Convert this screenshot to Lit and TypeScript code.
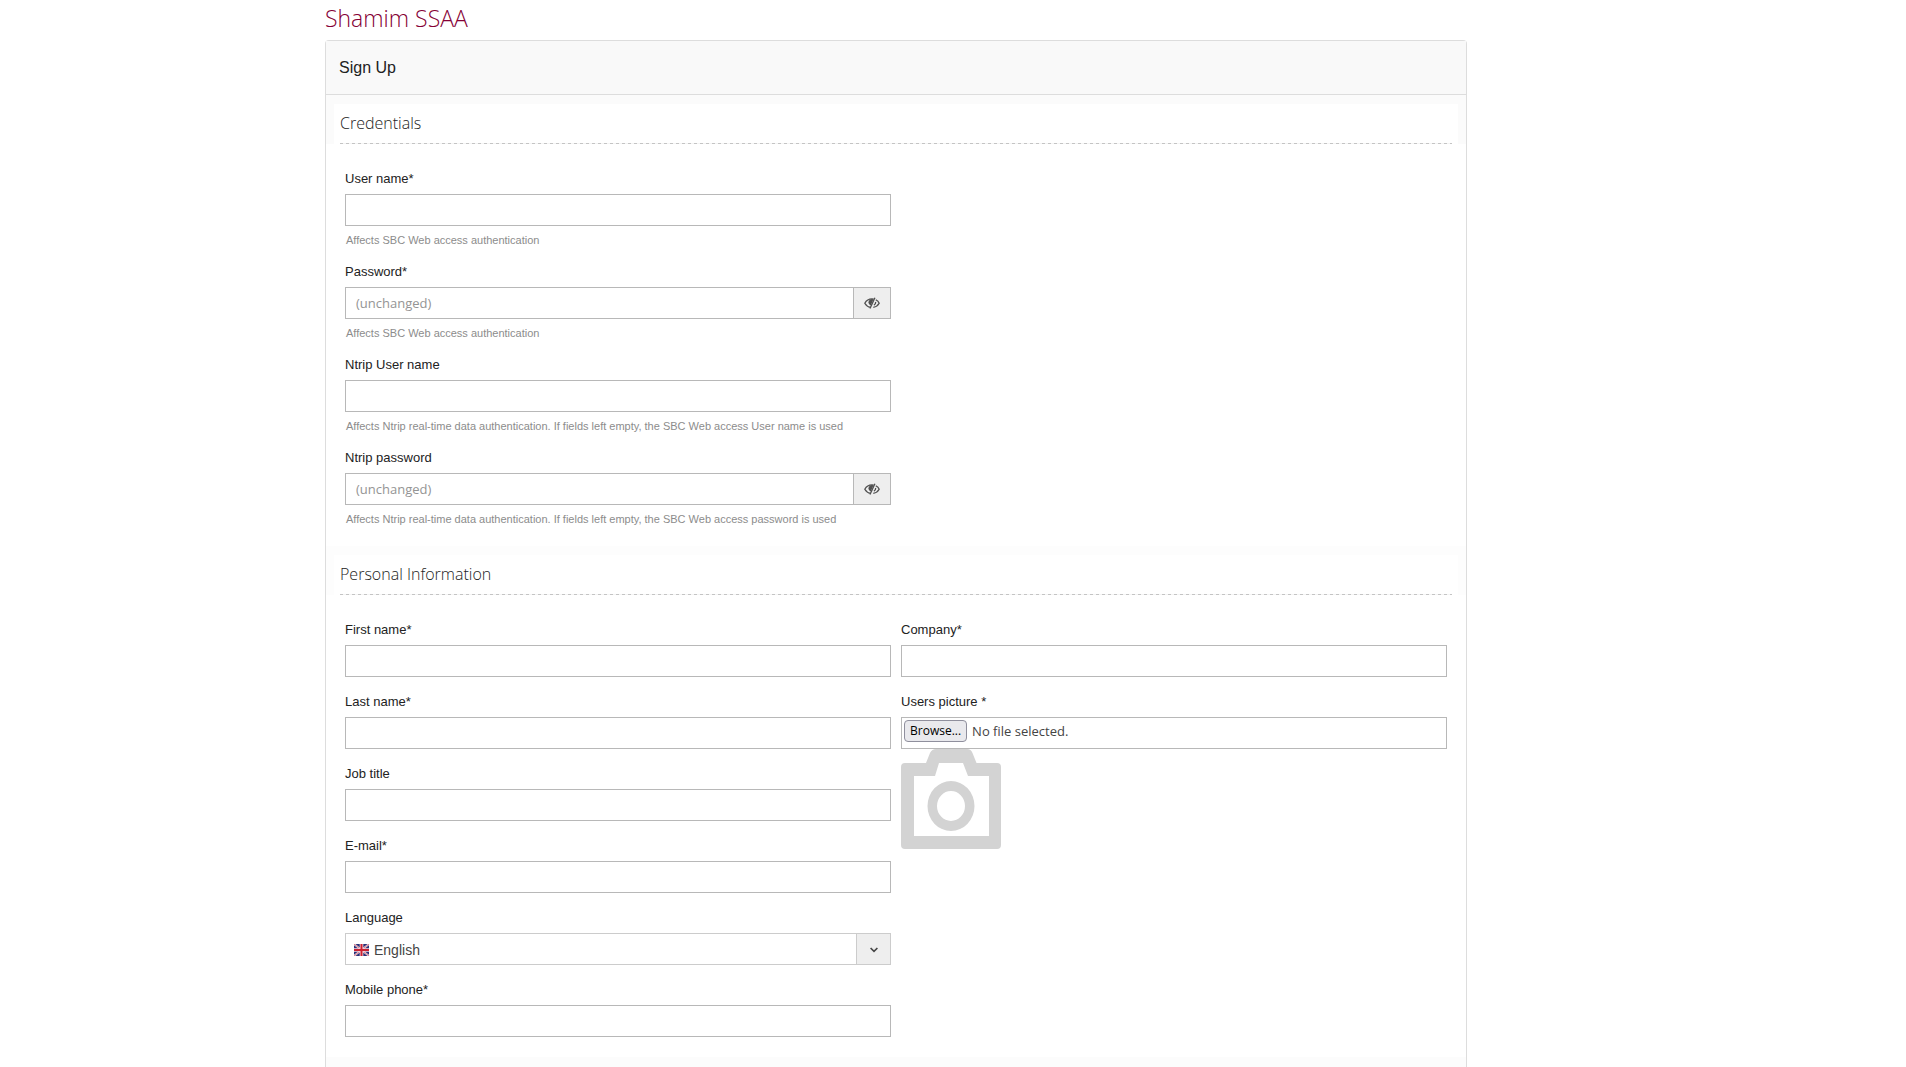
import { LitElement, html, svg, css, nothing } from "lit";
import { customElement, property } from "lit/decorators.js";

interface Field {
  id: string;
  label: string;
  kind?: "text" | "password" | "email" | "tel";
  hint?: string;
}

const WEB = "Affects SBC Web access authentication";
const NTRIP = "Affects Ntrip real-time data authentication. If fields left empty, the SBC Web access ";

const credentials: Field[] = [
  { id: "user-name", label: "User name*", hint: WEB },
  { id: "password", label: "Password*", kind: "password", hint: WEB },
  { id: "ntrip-user", label: "Ntrip User name", hint: NTRIP + "User name is used" },
  { id: "ntrip-password", label: "Ntrip password", kind: "password", hint: NTRIP + "password is used" },
];

const personal: Field[] = [
  { id: "first-name", label: "First name*" },
  { id: "last-name", label: "Last name*" },
  { id: "job-title", label: "Job title" },
  { id: "email", label: "E-mail*", kind: "email" },
];

const eyeSlash = html`<svg class="eye" viewBox="0 0 16 12" aria-hidden="true">
  <path d="M6.600 10.300C4.100 9.900 2 8.300.8 6.200 2.300 3.500 4.800 1.900 8 1.900c.6 0 1.200.1 1.700.2" />
  <path d="M11.800 2.800C13.300 3.600 14.500 4.700 15.200 6.200c-1.100 2-3 3.600-5.900 4.100" />
  <path d="M10.900 .7 6 11.500" />
  <path class="solid" d="M9.500 2.200 6.800 8.400C5.300 7.900 4.500 6.800 4.500 5.300 4.500 3.500 6.100 2 8 2z" />
  <path d="M11.700 4.900c.1 1.300-.6 2.700-1.800 3.200" />
</svg>`;

const camera = svg`<path fill-rule="evenodd" d="M4 14H25L29 4Q31 0 35 0H66Q70 0 71.500 4L75.500 14H96Q100 14 100 18V96Q100 100 96 100H4Q0 100 0 96V18Q0 14 4 14ZM13 27V87H88V27H67L62 14H38L34 27Z"/>
  <path fill-rule="evenodd" d="M50 32A23.500 25 0 0 1 50 82A23.500 25 0 0 1 50 32ZM50 42A14 15 0 0 0 50 72A14 15 0 0 0 50 42Z"/>`;

const controls = css`
  .field {
    display: flex;
    flex-direction: column;
  }
  label {
    margin-bottom: 5px;
    font-size: 13px;
    line-height: 20px;
    color: #222;
  }
  .box {
    display: flex;
    box-sizing: border-box;
    height: 32px;
    border: 1px solid #b8b8b8;
    background: #fff;
  }
`;

@customElement("sign-field")
export class SignField extends LitElement {
  @property({ attribute: false }) field!: Field;

  static styles = [
    controls,
    css`
      :host {
        display: block;
      }
      input {
        flex: 1;
        min-width: 0;
        border: 0;
        padding: 0 10px;
        background: none;
        font: 13px/18px "Open Sans", sans-serif;
        color: #404040;
      }
      input::placeholder {
        color: #949494;
      }
      button {
        width: 37px;
        padding: 0;
        border: 0;
        border-left: 1px solid #b8b8b8;
        background: #eee;
        display: grid;
        place-items: center;
      }
      .eye {
        width: 16px;
        height: 12px;
        fill: none;
        stroke: #505050;
        stroke-width: 1.3;
      }
      .solid {
        fill: #505050;
        stroke: none;
      }
      .hint {
        margin: 7px 0 0;
        padding-left: 1px;
        font-size: 11px;
        line-height: 14px;
        color: #8c8c8c;
      }
    `,
  ];

  render() {
    const { id, label, kind = "text", hint } = this.field;
    const secret = kind === "password";
    return html`<div class="field">
      <label for=${id}>${label}</label>
      <div class="box">
        <input id=${id} type=${kind} placeholder=${secret ? "(unchanged)" : nothing} />
        ${secret ? html`<button type="button" aria-label="Show password">${eyeSlash}</button>` : nothing}
      </div>
      ${hint ? html`<p class="hint">${hint}</p>` : nothing}
    </div>`;
  }
}

@customElement("app-root")
export class AppRoot extends LitElement {
  static styles = [
    controls,
    css`
      :host {
        display: grid;
        grid-template-columns: 325fr 1142fr 439fr;
        font-family: "Liberation Sans", Arial, sans-serif;
        background: #fff;
      }
      main {
        grid-column: 2;
        min-width: 0;
      }
      h1 {
        margin: 0;
        height: 40px;
        font: 300 23px/36px "Open Sans", sans-serif;
        color: #850035;
      }
      .panel {
        border: 1px solid #ddd;
        border-radius: 4px 4px 0 0;
        border-bottom: 0;
      }
      h2 {
        margin: 0;
        padding: 0 13px;
        font-size: 16px;
        font-weight: 400;
        line-height: 53px;
        color: #222;
        background: #f9f9f9;
        border-bottom: 1px solid #ddd;
      }
      section {
        padding-bottom: 20px;
      }
      .legend {
        border: 0 solid #fbfbfb;
        border-width: 9px 8px 0;
        padding: 0 6px;
      }
      .next .legend {
        border-color: #fdfdfd;
      }
      h3 {
        margin: 0;
        font: 300 16px/39px "Open Sans", sans-serif;
        color: #222;
      }
      .rule {
        height: 1px;
        background: repeating-linear-gradient(90deg, #c4c4c4 0 3px, #f4f4f4 3px 6px);
      }
      .columns {
        display: grid;
        grid-template-columns: 1fr 1fr;
        gap: 10px;
        padding: 25px 19px 0;
      }
      .column {
        display: flex;
        flex-direction: column;
        gap: 15px;
      }
      .pick {
        position: relative;
        align-items: flex-start;
        gap: 5px;
        padding: 2px;
        font: 13px/22px "Open Sans", sans-serif;
        color: #444;
      }
      .pick input {
        position: absolute;
        inset: 0;
        width: 100%;
        opacity: 0;
      }
      .browse {
        padding: 0 5px;
        border: 1px solid #8f8f9d;
        border-radius: 4px;
        background: #e9e9ed;
        font-size: 12px;
        line-height: 20px;
        color: #000;
      }
      .camera {
        display: block;
        width: 100px;
        height: 100px;
        fill: #d3d3d3;
      }
      .photo {
        display: flex;
        flex-direction: column;
      }
      .select {
        border-color: #ccc;
        display: grid;
        grid-template-columns: 8px 16px 1fr 34px;
        align-items: stretch;
      }
      select {
        grid-area: 1 / 1 / 2 / 5;
        appearance: none;
        border: 0;
        background: none;
        padding: 2px 40px 0 28px;
        font: 14px/28px "Liberation Sans", Arial, sans-serif;
        color: #444;
      }
      .flag {
        grid-area: 1 / 2;
        align-self: center;
        width: 16px;
        height: 12px;
        margin-top: 2px;
        pointer-events: none;
      }
      .arrow {
        grid-area: 1 / 4;
        display: grid;
        place-items: center;
        padding-top: 2px;
        border-left: 1px solid #ccc;
        background: #eee;
        pointer-events: none;
      }
      .arrow svg {
        width: 8px;
        height: 6px;
        fill: none;
        stroke: #444;
        stroke-width: 1.6;
      }
      .tail {
        height: 10px;
        background: #fcfcfc;
      }
    `,
  ];

  private fields(list: Field[]) {
    return list.map((f) => html`<sign-field .field=${f}></sign-field>`);
  }

  private legend(text: string) {
    return html`<div class="legend">
      <h3>${text}</h3>
      <div class="rule"></div>
    </div>`;
  }

  render() {
    return html`<main>
      <h1>Shamim SSAA</h1>
      <form class="panel">
        <h2>Sign Up</h2>
        <section>
          ${this.legend("Credentials")}
          <div class="columns"><div class="column">${this.fields(credentials)}</div></div>
        </section>
        <section class="next">
          ${this.legend("Personal Information")}
          <div class="columns">
            <div class="column">
              ${this.fields(personal)}
              <div class="field">
                <label for="language">Language</label>
                <div class="box select">
                  <select id="language">
                    <option>English</option>
                  </select>
                  <svg class="flag" viewBox="0 0 16 12" aria-hidden="true">
                    <path fill="#283078" d="M0 0h15v12H0z" />
                    <path stroke="#f0dce6" stroke-width="1.800" d="M0 0l15 12M15 0L0 12" />
                    <path stroke="#d0505c" stroke-width=".7" d="M0 0l15 12M15 0L0 12" />
                    <path stroke="#f4dce2" stroke-width="3.600" d="M7.500 0v12M0 6h15" />
                    <path stroke="#cc2030" stroke-width="2" d="M7.500 0v12M0 6h15" />
                  </svg>
                  <span class="arrow"><svg viewBox="0 0 8 6" aria-hidden="true"><path d="M.6 1 4 4.400 7.400 1" /></svg></span>
                </div>
              </div>
              ${this.fields([{ id: "mobile", label: "Mobile phone*", kind: "tel" }])}
            </div>
            <div class="column">
              ${this.fields([{ id: "company", label: "Company*" }])}
              <div class="photo">
                <div class="field">
                  <label for="picture">Users picture *</label>
                  <div class="box pick">
                    <span class="browse">Browse...</span><span>No file selected.</span>
                    <input id="picture" type="file" />
                  </div>
                </div>
                <svg class="camera" viewBox="0 0 100 100" aria-hidden="true">${camera}</svg>
              </div>
            </div>
          </div>
        </section>
        <div class="tail"></div>
      </form>
    </main>`;
  }
}
